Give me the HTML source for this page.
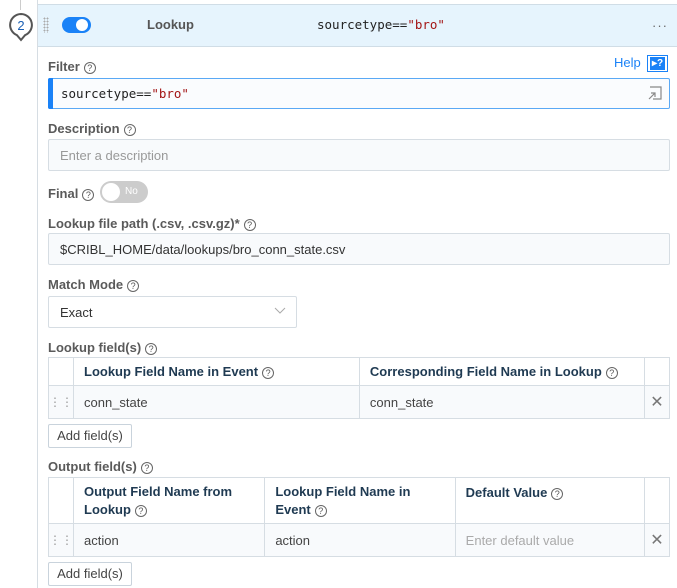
<!DOCTYPE html><html><head><style>
*{box-sizing:border-box;margin:0;padding:0}
body{width:677px;height:588px;background:#fff;font-family:"Liberation Sans",sans-serif;position:relative;overflow:hidden;color:#333}
.a{position:absolute}
.lbl{position:absolute;left:48px;font-size:13px;font-weight:bold;color:#5a5a5a}
.q{display:inline-block;width:12px;height:12px;border:1.2px solid #666;border-radius:50%;font-size:9px;line-height:10px;text-align:center;font-weight:normal;color:#555;vertical-align:0px;margin-left:4px}
.inp{position:absolute;left:48px;border:1px solid #d6dde3;background:#f8fafc;border-radius:2px;font-size:13px;color:#333;padding-left:11px;display:flex;align-items:center}
.mono{font-family:"DejaVu Sans Mono","Liberation Mono",monospace;font-size:12.5px}
.s{color:#a31515}
table{position:absolute;left:48px;width:622px;border-collapse:collapse;font-size:13px}
td{border:1px solid #d6dde3;padding:0 10px;color:#444}
th{border:1px solid #d6dde3;padding:0 10px;text-align:left;color:#1f3a52;font-size:13px;background:#fff}
.btn{position:absolute;left:48px;width:84px;height:24px;border:1px solid #c9d3dc;border-radius:2px;background:#fff;font-size:13px;color:#444;text-align:center;line-height:22px}
.drag{color:#999;font-size:12px;text-align:center;padding:0}
.x{color:#777;text-align:center;padding:0;font-size:16px}
</style></head><body>
<div class="a" style="left:20px;top:0;width:1px;height:10px;background:#ccc"></div>
<div class="a" style="left:37px;top:0;width:1px;height:588px;background:#d6dde3"></div>
<svg class="a" style="left:8px;top:12px" width="26" height="32"><path d="M13 2a11 11 0 0 1 4 21.2L13 28l-4-4.8A11 11 0 0 1 13 2z" fill="#fff" stroke="#555" stroke-width="2"/><text x="13" y="18" text-anchor="middle" font-size="13" fill="#1a5fb4" font-family="Liberation Sans">2</text></svg>
<div class="a" style="left:38px;top:4px;width:639px;height:43px;background:#e6f4fd;border-top:1px solid #d0dde6;border-bottom:1px solid #d0dde6"></div>
<div class="a" style="left:43px;top:17px;width:6px;height:16px;background:radial-gradient(circle,#aaa 0.8px,transparent 1px) 0 0/3px 3px"></div>
<div class="a" style="left:62px;top:17px;width:29px;height:16px;border-radius:8px;background:#1a82f7"></div>
<div class="a" style="left:76px;top:19px;width:12px;height:12px;border-radius:50%;background:#fff"></div>
<div class="a" style="left:147px;top:17px;font-size:13px;font-weight:bold;color:#555">Lookup</div>
<div class="a mono" style="left:317px;top:17px;color:#222">sourcetype==<span class="s">"bro"</span></div>
<div class="a" style="left:652px;top:18px;color:#666;font-size:13px;letter-spacing:1px">···</div>
<div class="lbl" style="top:59px">Filter<span class="q">?</span></div>
<div class="a" style="left:614px;top:55px;font-size:13px;color:#1a82f7">Help</div>
<div class="a" style="left:647px;top:55px;width:21px;height:17px;border:1px solid #1a82f7;background:#fff"><div class="a" style="left:2px;top:1px;width:15px;height:13px;background:#1a82f7;color:#fff;font-size:10px;font-weight:bold;line-height:13px;padding-left:2px">▸?</div></div>
<div class="inp" style="top:78px;width:622px;height:31px;border-color:#5aa9f5;padding-left:12px;background:#fafcfe"><span class="mono" style="color:#222">sourcetype==<span class="s">"bro"</span></span></div>
<div class="a" style="left:48px;top:78px;width:5px;height:31px;background:#1a82f7;border-radius:2px 0 0 2px"></div>
<svg class="a" style="left:647px;top:85px" width="16" height="16"><path d="M3 2h11v12H6M2 14l6-6M4 8h4v4" fill="none" stroke="#888" stroke-width="1.2"/></svg>
<div class="lbl" style="top:121px">Description<span class="q">?</span></div>
<div class="inp" style="top:139px;width:622px;height:32px;color:#999">Enter a description</div>
<div class="lbl" style="top:186px">Final<span class="q">?</span></div>
<div class="a" style="left:100px;top:181px;width:48px;height:22px;border-radius:11px;background:#ccc"></div>
<div class="a" style="left:102px;top:183px;width:18px;height:18px;border-radius:50%;background:#fff"></div>
<div class="a" style="left:125px;top:186px;font-size:10px;color:#fff">No</div>
<div class="lbl" style="top:216px">Lookup file path (.csv, .csv.gz)*<span class="q">?</span></div>
<div class="inp" style="top:233px;width:622px;height:32px">$CRIBL_HOME/data/lookups/bro_conn_state.csv</div>
<div class="lbl" style="top:277px">Match Mode<span class="q">?</span></div>
<div class="inp" style="top:296px;width:249px;height:32px;background:#fff">Exact</div>
<svg class="a" style="left:274px;top:307px" width="12" height="8"><path d="M1 1l5 5 5-5" fill="none" stroke="#aaa"/></svg>
<div class="lbl" style="top:340px">Lookup field(s)<span class="q">?</span></div>
<table style="top:357px"><tr style="height:28px"><th style="width:24px"></th><th style="width:287px">Lookup Field Name in Event<span class="q">?</span></th><th style="width:286px">Corresponding Field Name in Lookup<span class="q">?</span></th><th style="width:25px"></th></tr>
<tr style="height:33px;background:#f8fafc"><td class="drag">⋮⋮</td><td>conn_state</td><td>conn_state</td><td class="x">✕</td></tr></table>
<div class="btn" style="top:424px">Add field(s)</div>
<div class="lbl" style="top:459px">Output field(s)<span class="q">?</span></div>
<table style="top:477px"><tr style="height:46px"><th style="width:24px"></th><th style="width:192px;line-height:18px">Output Field Name from Lookup<span class="q">?</span></th><th style="width:191px;line-height:18px">Lookup Field Name in Event<span class="q">?</span></th><th style="width:190px;vertical-align:top;padding-top:7px">Default Value<span class="q">?</span></th><th style="width:25px"></th></tr>
<tr style="height:33px;background:#f8fafc"><td class="drag">⋮⋮</td><td>action</td><td>action</td><td style="color:#aaa">Enter default value</td><td class="x">✕</td></tr></table>
<div class="btn" style="top:562px">Add field(s)</div>
</body></html>
